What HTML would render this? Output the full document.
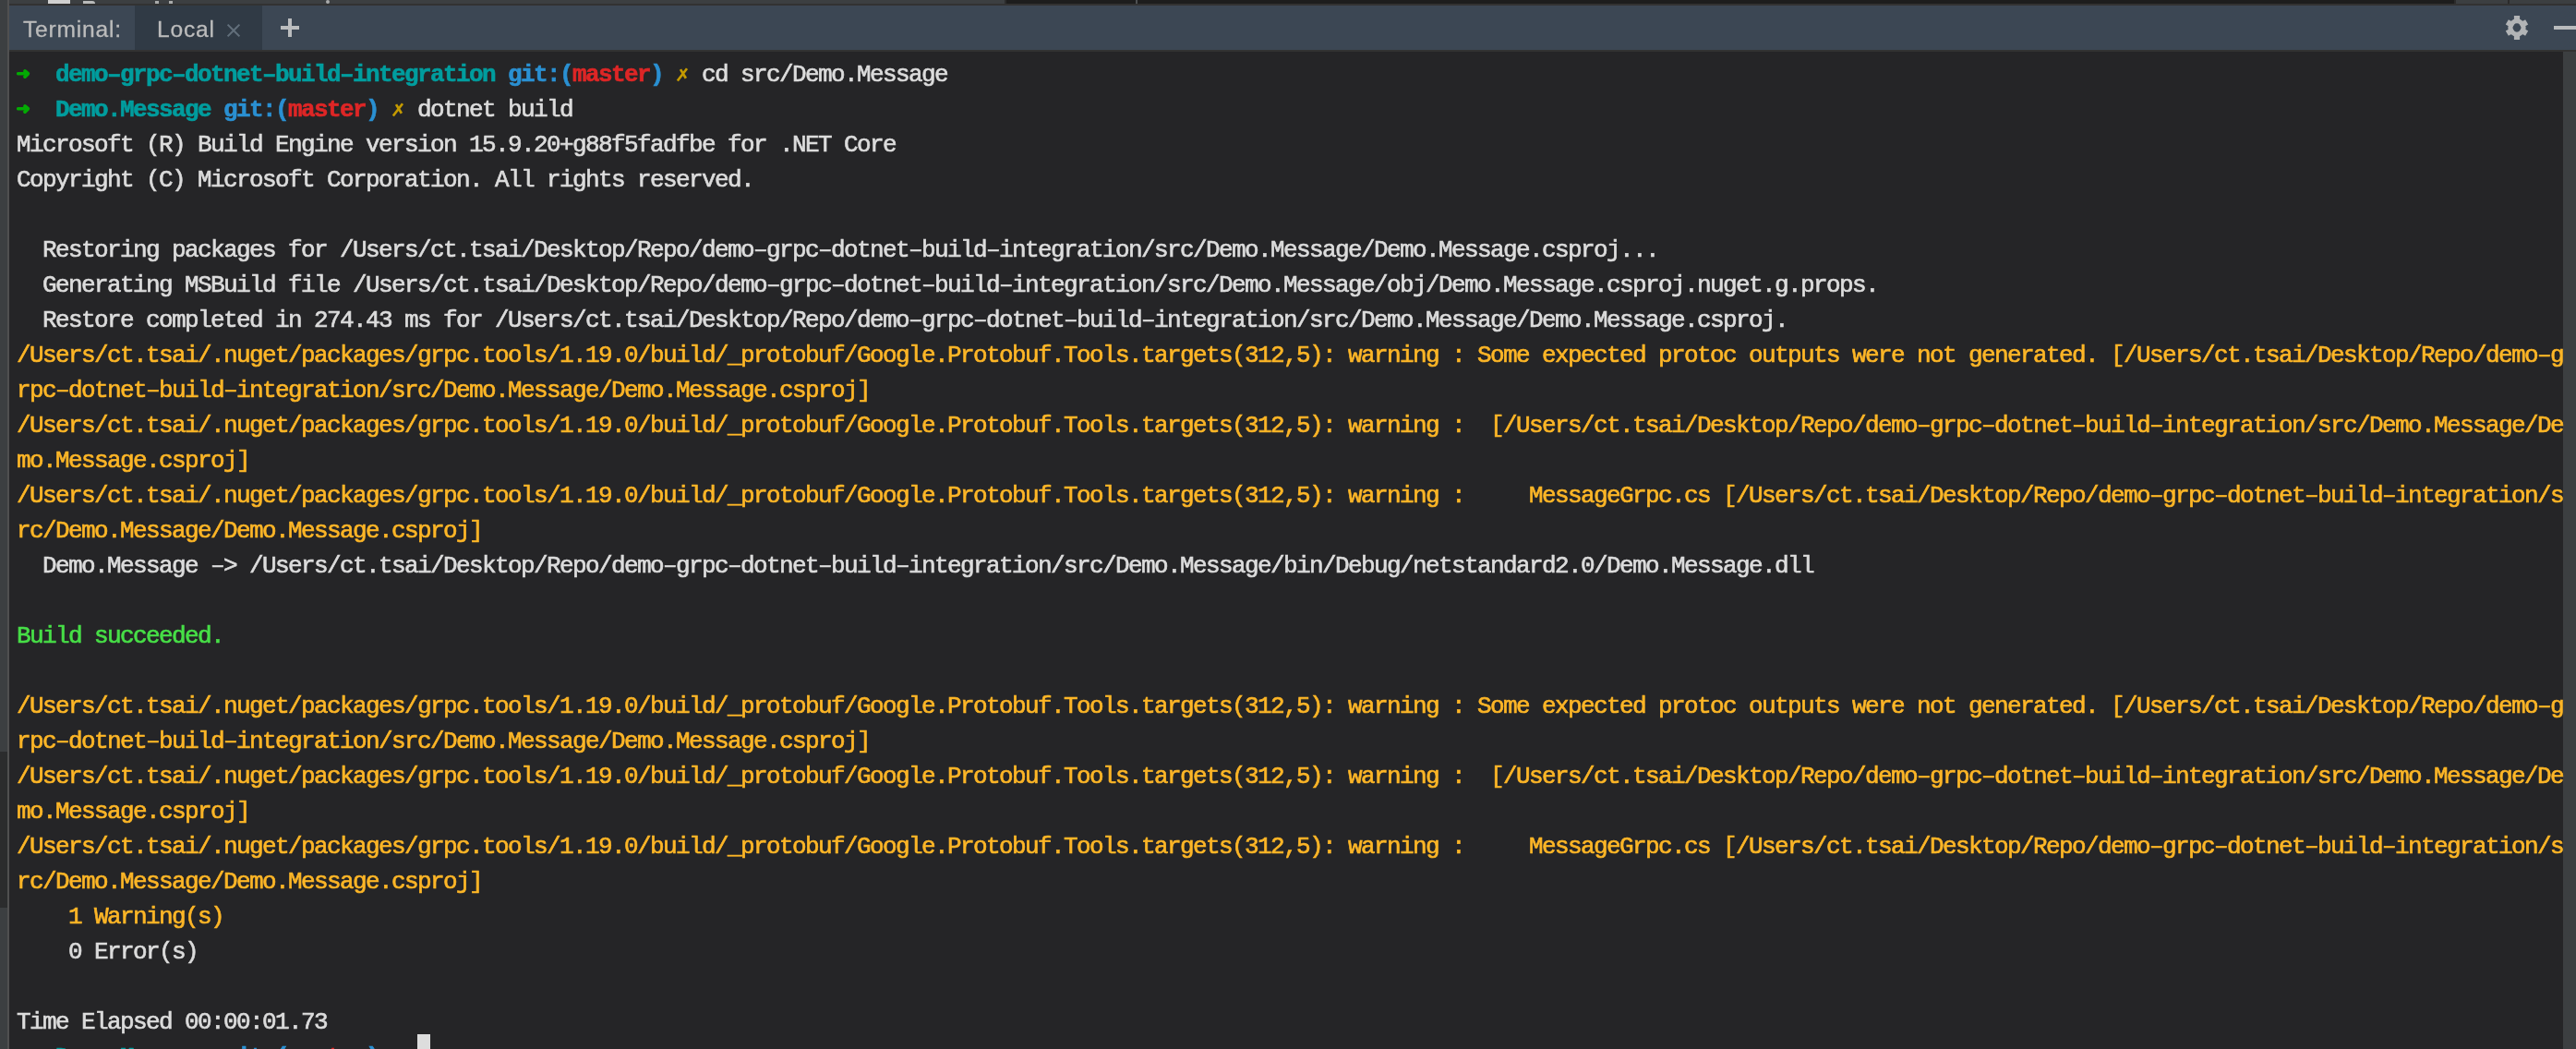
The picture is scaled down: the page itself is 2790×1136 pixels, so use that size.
<!DOCTYPE html>
<html><head><meta charset="utf-8"><title>Terminal</title>
<style>
html,body{margin:0;padding:0}
body{width:2790px;height:1136px;overflow:hidden;position:relative;background:#252527;font-family:"Liberation Sans",sans-serif}
.abs{position:absolute}
#top{left:0;top:0;width:2790px;height:4px;background:#3c3f41}
#topdark{left:1090px;top:0;width:1568px;height:4px;background:#1d1d1d}
#topline{left:0;top:4px;width:2790px;height:2px;background:#323232}
#hdr{left:10px;top:6px;width:2780px;height:48px;background:#3c4754}
#tab{left:146px;top:6px;width:138px;height:48px;background:#303a45}
#hline{left:8px;top:54px;width:2782px;height:2px;background:#323232}
#lstrip{left:0;top:0;width:8px;height:1136px;background:#3c3f41}
#lsel{left:0;top:814px;width:8px;height:169px;background:#2b2c2d}
#lborder{left:8px;top:0;width:2px;height:1136px;background:#505050}
#sb{left:2776px;top:56px;width:14px;height:1080px;background:#3c3f41}
.ht{position:absolute;top:6.8px;height:48px;line-height:50px;font-size:24.6px;letter-spacing:0.8px;color:#bcbcbc;white-space:pre;will-change:transform;-webkit-text-stroke:0.3px}
#term{position:absolute;left:18px;top:56px;will-change:transform;width:2760px;height:1080px;overflow:hidden;
 font-family:"Liberation Mono",monospace;font-size:26.0px;letter-spacing:-1.6025px;color:#dcdcdc;-webkit-text-stroke:0.65px}
.l{height:38px;line-height:50px;overflow:visible;white-space:pre}
.y{color:#fdb627}
.gr{color:#47df47}
b{font-weight:bold;-webkit-text-stroke:0.6px}
.c{color:#009d9e}
.b{color:#2a90d2}
.r{color:#de2626}
.g{display:inline-block;width:14px;height:38px;vertical-align:top;margin:0;letter-spacing:0;overflow:visible}
.cur{display:inline-block;width:14px;height:38px;background:#dddddd;vertical-align:top}
.gear{position:absolute;left:2712px;top:16px;width:28px;height:28px}
</style></head><body>
<div class="abs" id="top"></div><div class="abs" id="topdark"></div>
<div class="abs" style="left:1088px;top:0;width:2px;height:4px;background:#2b2b2b"></div>
<div class="abs" style="left:1230px;top:0;width:2px;height:4px;background:#4e5052"></div>
<div class="abs" style="left:2658px;top:0;width:2px;height:4px;background:#2b2b2b"></div>
<div class="abs" style="left:2716px;top:0;width:2px;height:4px;background:#2b2b2b"></div>
<div class="abs" style="left:52px;top:0;width:24px;height:4px;background:#d0d0d0"></div>
<div class="abs" style="left:90px;top:1px;width:13px;height:3px;background:#b9baba;border-radius:0 10px 0 0"></div>
<div class="abs" style="left:168px;top:1px;width:4px;height:3px;background:#a9abab"></div>
<div class="abs" style="left:183px;top:1px;width:4px;height:3px;background:#a9abab"></div>
<div class="abs" style="left:353px;top:0;width:4px;height:4px;background:#a9abab;border-radius:2px"></div>
<div class="abs" id="topline"></div>
<div class="abs" id="hdr"></div><div class="abs" id="tab"></div><div class="abs" id="hline"></div>
<div class="abs" id="lstrip"></div><div class="abs" id="lsel"></div><div class="abs" id="lborder"></div>
<div class="abs" id="sb"></div>
<div class="ht" style="left:25px">Terminal:</div>
<div class="ht" style="left:170px">Local</div>
<svg class="abs" style="left:245px;top:25px" width="16" height="16" viewBox="0 0 16 16"><path d="M1.6 1.6L14.4 14.4M14.4 1.6L1.6 14.4" stroke="#626f7b" stroke-width="2" fill="none"/></svg>
<div class="abs" style="left:304px;top:28px;width:20px;height:4px;background:#babcbe"></div><div class="abs" style="left:312px;top:20px;width:4px;height:20px;background:#babcbe"></div>
<svg class="gear" viewBox="-14 -14 28 28"><g fill="#b2b4b6"><rect x="-3.1" y="-13" width="6.2" height="8" transform="rotate(0)"/><rect x="-3.1" y="-12.3" width="6.2" height="8" transform="rotate(60)"/><rect x="-3.1" y="-12.3" width="6.2" height="8" transform="rotate(120)"/><rect x="-3.1" y="-13" width="6.2" height="8" transform="rotate(180)"/><rect x="-3.1" y="-12.3" width="6.2" height="8" transform="rotate(240)"/><rect x="-3.1" y="-12.3" width="6.2" height="8" transform="rotate(300)"/></g><circle r="7.2" fill="none" stroke="#b2b4b6" stroke-width="5"/></svg>
<div class="abs" style="left:2766px;top:28px;width:24px;height:4px;background:#b9bbbd"></div>
<div id="term">
<div class="l "><svg class="g" viewBox="0 0 14 38"><path d="M1.7 23.7H11" fill="none" stroke="#03aa03" stroke-width="3.6" stroke-linecap="round"/><path d="M9 20.9L12.3 23.8L9 27.1" fill="none" stroke="#03aa03" stroke-width="3.8" stroke-linecap="round" stroke-linejoin="round"/></svg>  <b class="c">demo–grpc–dotnet–build–integration</b> <b class="b">git:(</b><b class="r">master</b><b class="b">)</b> <svg class="g" viewBox="0 0 14 38"><path d="M1.8 31.5L12 18.2M5 19.1L10.9 28.8" fill="none" stroke="#c49a00" stroke-width="2.7"/></svg> cd src/Demo.Message</div>
<div class="l "><svg class="g" viewBox="0 0 14 38"><path d="M1.7 23.7H11" fill="none" stroke="#03aa03" stroke-width="3.6" stroke-linecap="round"/><path d="M9 20.9L12.3 23.8L9 27.1" fill="none" stroke="#03aa03" stroke-width="3.8" stroke-linecap="round" stroke-linejoin="round"/></svg>  <b class="c">Demo.Message</b> <b class="b">git:(</b><b class="r">master</b><b class="b">)</b> <svg class="g" viewBox="0 0 14 38"><path d="M1.8 31.5L12 18.2M5 19.1L10.9 28.8" fill="none" stroke="#c49a00" stroke-width="2.7"/></svg> dotnet build</div>
<div class="l ">Microsoft (R) Build Engine version 15.9.20+g88f5fadfbe for .NET Core</div>
<div class="l ">Copyright (C) Microsoft Corporation. All rights reserved.</div>
<div class="l ">&nbsp;</div>
<div class="l ">  Restoring packages for /Users/ct.tsai/Desktop/Repo/demo–grpc–dotnet–build–integration/src/Demo.Message/Demo.Message.csproj...</div>
<div class="l ">  Generating MSBuild file /Users/ct.tsai/Desktop/Repo/demo–grpc–dotnet–build–integration/src/Demo.Message/obj/Demo.Message.csproj.nuget.g.props.</div>
<div class="l ">  Restore completed in 274.43 ms for /Users/ct.tsai/Desktop/Repo/demo–grpc–dotnet–build–integration/src/Demo.Message/Demo.Message.csproj.</div>
<div class="l y">/Users/ct.tsai/.nuget/packages/grpc.tools/1.19.0/build/_protobuf/Google.Protobuf.Tools.targets(312,5): warning : Some expected protoc outputs were not generated. [/Users/ct.tsai/Desktop/Repo/demo–g</div>
<div class="l y">rpc–dotnet–build–integration/src/Demo.Message/Demo.Message.csproj]</div>
<div class="l y">/Users/ct.tsai/.nuget/packages/grpc.tools/1.19.0/build/_protobuf/Google.Protobuf.Tools.targets(312,5): warning :  [/Users/ct.tsai/Desktop/Repo/demo–grpc–dotnet–build–integration/src/Demo.Message/De</div>
<div class="l y">mo.Message.csproj]</div>
<div class="l y">/Users/ct.tsai/.nuget/packages/grpc.tools/1.19.0/build/_protobuf/Google.Protobuf.Tools.targets(312,5): warning :     MessageGrpc.cs [/Users/ct.tsai/Desktop/Repo/demo–grpc–dotnet–build–integration/s</div>
<div class="l y">rc/Demo.Message/Demo.Message.csproj]</div>
<div class="l ">  Demo.Message –&gt; /Users/ct.tsai/Desktop/Repo/demo–grpc–dotnet–build–integration/src/Demo.Message/bin/Debug/netstandard2.0/Demo.Message.dll</div>
<div class="l ">&nbsp;</div>
<div class="l gr">Build succeeded.</div>
<div class="l ">&nbsp;</div>
<div class="l y">/Users/ct.tsai/.nuget/packages/grpc.tools/1.19.0/build/_protobuf/Google.Protobuf.Tools.targets(312,5): warning : Some expected protoc outputs were not generated. [/Users/ct.tsai/Desktop/Repo/demo–g</div>
<div class="l y">rpc–dotnet–build–integration/src/Demo.Message/Demo.Message.csproj]</div>
<div class="l y">/Users/ct.tsai/.nuget/packages/grpc.tools/1.19.0/build/_protobuf/Google.Protobuf.Tools.targets(312,5): warning :  [/Users/ct.tsai/Desktop/Repo/demo–grpc–dotnet–build–integration/src/Demo.Message/De</div>
<div class="l y">mo.Message.csproj]</div>
<div class="l y">/Users/ct.tsai/.nuget/packages/grpc.tools/1.19.0/build/_protobuf/Google.Protobuf.Tools.targets(312,5): warning :     MessageGrpc.cs [/Users/ct.tsai/Desktop/Repo/demo–grpc–dotnet–build–integration/s</div>
<div class="l y">rc/Demo.Message/Demo.Message.csproj]</div>
<div class="l y">    1 Warning(s)</div>
<div class="l ">    0 Error(s)</div>
<div class="l ">&nbsp;</div>
<div class="l ">Time Elapsed 00:00:01.73</div>
<div class="l "><svg class="g" viewBox="0 0 14 38"><path d="M1.7 23.7H11" fill="none" stroke="#03aa03" stroke-width="3.6" stroke-linecap="round"/><path d="M9 20.9L12.3 23.8L9 27.1" fill="none" stroke="#03aa03" stroke-width="3.8" stroke-linecap="round" stroke-linejoin="round"/></svg>  <b class="c">Demo.Message</b> <b class="b">git:(</b><b class="r">master</b><b class="b">)</b> <svg class="g" viewBox="0 0 14 38"><path d="M1.8 31.5L12 18.2M5 19.1L10.9 28.8" fill="none" stroke="#c49a00" stroke-width="2.7"/></svg> <i class="cur"></i></div>
</div>
</body></html>
